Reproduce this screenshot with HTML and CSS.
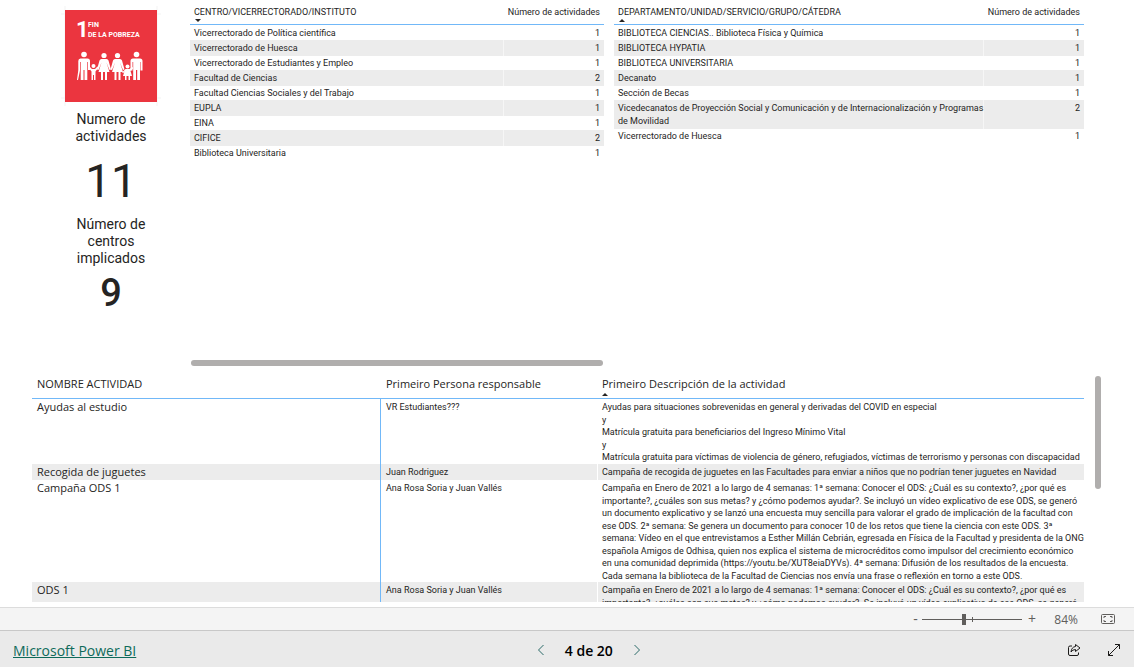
FILE: index.html
```html
<!DOCTYPE html>
<html lang="es">
<head>
<meta charset="utf-8">
<title>Microsoft Power BI</title>
<link rel="stylesheet" href="styles.css">
</head>
<body>
<main class="report">
  <section class="summary">
    <aside class="cards">
      <svg class="goal" viewBox="0 0 92 92" role="img" aria-label="Objetivo 1: Fin de la pobreza">
        <path class="crop" d="M0 -4V96M92 -4V96M-4 4H96M-4 88H96"/>
        <rect class="goal-bg" width="92" height="92"/>
        <text class="goal-number" x="11" y="27">1</text>
        <text class="goal-text" x="23" y="17">FIN</text>
        <text class="goal-text" x="23" y="27">DE LA POBREZA</text>
        <g class="people">
          <circle cx="19" cy="44.500" r="2.800"/>
          <path d="M15.500 48.500h7q2.500 0 2.500 2.500v9h-2v-8h-.700v18h-2.800V60h-1v10h-2.800V52h-.700v8.500L13 70h-1l1.300-10V51q0-2.500 2.200-2.500z"/>
          <circle cx="28.500" cy="56" r="2"/>
          <path d="M24.500 56.500l2.500 2.500h3l2.500-2.500 1 1-3 4V70h-1.500v-5h-1v5h-1.500v-8.500l-3-4z"/>
          <circle cx="39" cy="45.500" r="2.600"/>
          <path d="M36.500 49h5q1.500 0 2 1.500l2.500 9-1.500.500-3-7.500L44.500 62H42v8h-2v-8h-2v8h-2v-8h-2.500l3-9.500-3 7.500-1.500-.500 2.500-9q.500-1.500 2-1.500z"/>
          <circle cx="52.500" cy="45.500" r="2.600"/>
          <path d="M50 49h5q1.500 0 2 1.500l2.500 9-1.500.500-3-7.500L58 62h-2.500v8h-2v-8h-2v8h-2v-8H47l3-9.500-3 7.500-1.500-.500 2.500-9q.500-1.500 2-1.500z"/>
          <circle cx="62.500" cy="56.500" r="2"/>
          <path d="M60.500 59h4l3-2 .700 1.300-2.700 2.700 1.500 5H65v4h-1.500v-4h-2v4H60v-4h-2l1.500-5-1 2-1.500-.500z"/>
          <circle cx="71.500" cy="44.500" r="2.800"/>
          <path d="M68 48.500h7q2.500 0 2.500 2.500v9.500h-2V52H75v18h-2.800V60h-1.200v10h-2.800V52h-.700v8.500h-2V51q0-2.500 2.500-2.500z"/>
        </g>
      </svg>
      <h2 class="card-label">Numero de actividades</h2>
      <p class="card-value card-value-main">11</p>
      <h2 class="card-label">Número de centros implicados</h2>
      <p class="card-value card-value-strong">9</p>
    </aside>

    <div class="panel panel-centers">
      <table class="counts">
        <thead>
          <tr><th>CENTRO/VICERRECTORADO/INSTITUTO<span class="sort sort-down"></span></th><th class="num">Número de actividades</th></tr>
        </thead>
        <tbody>
          <tr><td>Vicerrectorado de Política científica</td><td class="num">1</td></tr>
          <tr><td>Vicerrectorado de Huesca</td><td class="num">1</td></tr>
          <tr><td>Vicerrectorado de Estudiantes y Empleo</td><td class="num">1</td></tr>
          <tr><td>Facultad de Ciencias</td><td class="num">2</td></tr>
          <tr><td>Facultad Ciencias Sociales y del Trabajo</td><td class="num">1</td></tr>
          <tr><td>EUPLA</td><td class="num">1</td></tr>
          <tr><td>EINA</td><td class="num">1</td></tr>
          <tr><td>CIFICE</td><td class="num">2</td></tr>
          <tr><td>Biblioteca Universitaria</td><td class="num">1</td></tr>
        </tbody>
      </table>
      <div class="scroll-x"></div>
    </div>

    <div class="panel panel-units">
      <table class="counts">
        <thead>
          <tr><th>DEPARTAMENTO/UNIDAD/SERVICIO/GRUPO/CÁTEDRA<span class="sort sort-up"></span></th><th class="num">Número de actividades</th></tr>
        </thead>
        <tbody>
          <tr><td>BIBLIOTECA CIENCIAS.. Biblioteca Física y Química</td><td class="num">1</td></tr>
          <tr><td>BIBLIOTECA HYPATIA</td><td class="num">1</td></tr>
          <tr><td>BIBLIOTECA UNIVERSITARIA</td><td class="num">1</td></tr>
          <tr><td>Decanato</td><td class="num">1</td></tr>
          <tr><td>Sección de Becas</td><td class="num">1</td></tr>
          <tr class="tall"><td>Vicedecanatos de Proyección Social y Comunicación y de Internacionalización y Programas<br>de Movilidad</td><td class="num">2</td></tr>
          <tr><td>Vicerrectorado de Huesca</td><td class="num">1</td></tr>
        </tbody>
      </table>
    </div>
  </section>

  <section class="details">
    <div class="details-view">
      <table class="activities">
        <colgroup><col class="col-name"><col class="col-person"><col></colgroup>
        <thead>
          <tr><th>NOMBRE ACTIVIDAD</th><th>Primeiro Persona responsable</th><th>Primeiro Descripción de la actividad<span class="sort sort-up"></span></th></tr>
        </thead>
        <tbody>
          <tr>
            <td class="name">Ayudas al estudio</td>
            <td>VR Estudiantes???</td>
            <td><span class="line">Ayudas para situaciones sobrevenidas en general y derivadas del COVID en especial</span><span class="line">y</span><span class="line">Matrícula gratuita para beneficiarios del Ingreso Mínimo Vital</span><span class="line">y</span><span class="line">Matrícula gratuita para víctimas de violencia de género, refugiados, víctimas de terrorismo y personas con discapacidad</span></td>
          </tr>
          <tr>
            <td class="name">Recogida de juguetes</td>
            <td>Juan Rodriguez</td>
            <td><span class="line">Campaña de recogida de juguetes en las Facultades para enviar a niños que no podrían tener juguetes en Navidad</span></td>
          </tr>
          <tr>
            <td class="name">Campaña ODS 1</td>
            <td>Ana Rosa Soria y Juan Vallés</td>
            <td><span class="line">Campaña en Enero de 2021 a lo largo de 4 semanas: 1ª semana: Conocer el ODS: ¿Cuál es su contexto?, ¿por qué es</span><span class="line">importante?, ¿cuáles son sus metas? y ¿cómo podemos ayudar?. Se incluyó un vídeo explicativo de ese ODS, se generó</span><span class="line">un documento explicativo y se lanzó una encuesta muy sencilla para valorar el grado de implicación de la facultad con</span><span class="line">ese ODS. 2ª semana: Se genera un documento para conocer 10 de los retos que tiene la ciencia con este ODS. 3ª</span><span class="line">semana: Vídeo en el que entrevistamos a Esther Millán Cebrián, egresada en Física de la Facultad y presidenta de la ONG</span><span class="line">española Amigos de Odhisa, quien nos explica el sistema de microcréditos como impulsor del crecimiento económico</span><span class="line">en una comunidad deprimida (https://youtu.be/XUT8eiaDYVs). 4ª semana: Difusión de los resultados de la encuesta.</span><span class="line">Cada semana la biblioteca de la Facultad de Ciencias nos envía una frase o reflexión en torno a este ODS.</span></td>
          </tr>
          <tr>
            <td class="name">ODS 1</td>
            <td>Ana Rosa Soria y Juan Vallés</td>
            <td><span class="line">Campaña en Enero de 2021 a lo largo de 4 semanas: 1ª semana: Conocer el ODS: ¿Cuál es su contexto?, ¿por qué es</span><span class="line">importante?, ¿cuáles son sus metas? y ¿cómo podemos ayudar?. Se incluyó un vídeo explicativo de ese ODS, se generó</span></td>
          </tr>
        </tbody>
      </table>
    </div>
    <div class="scroll-y"></div>
  </section>
</main>

<div class="zoombar">
  <button class="step step-minus" type="button" aria-label="Alejar">-</button>
  <span class="slider">
    <input class="range" type="range" min="0" max="100" value="42" aria-label="Zoom">
    <span class="tick"></span>
  </span>
  <button class="step" type="button" aria-label="Acercar">+</button>
  <span class="percent">84%</span>
  <button class="icon-button" type="button" aria-label="Ajustar a la página">
    <svg width="16" height="12" viewBox="0 0 16 12"><rect x="1.500" y="1.500" width="13" height="9" rx="1"/><path d="M4 5V3.500h2M10 3.500h2V5M12 7v1.500h-2M6 8.500H4V7"/></svg>
  </button>
</div>

<footer class="footer">
  <a class="brand" href="#">Microsoft Power BI</a>
  <nav class="pager">
    <button class="icon-button arrow" type="button" aria-label="Página anterior"><svg width="8" height="12" viewBox="0 0 8 12"><path d="M6.500 1L1.500 6l5 5"/></svg></button>
    <span class="page">4 de 20</span>
    <button class="icon-button arrow" type="button" aria-label="Página siguiente"><svg width="8" height="12" viewBox="0 0 8 12"><path d="M1.500 1l5 5-5 5"/></svg></button>
  </nav>
  <div class="actions">
    <button class="icon-button dark" type="button" aria-label="Compartir"><svg width="14" height="14" viewBox="0 0 14 14"><path d="M5 3H3Q1.500 3 1.500 4.500v6.500q0 1.500 1.500 1.500h7q1.500 0 1.500-1.500V9.500M8.500 1.500L13 5 8.500 8.500v-2Q5.500 6.500 4 9q.500-5 4.500-5.500z"/></svg></button>
    <button class="icon-button dark" type="button" aria-label="Pantalla completa"><svg width="14" height="14" viewBox="0 0 14 14"><path d="M1.500 12.500l11-11M8 1.500h4.500V6M1.500 8v4.500H6"/></svg></button>
  </div>
</footer>
</body>
</html>
```
FILE: styles.css
```css
* {
  box-sizing: border-box;
}

body {
  display: flex;
  flex-direction: column;
  height: 100vh;
  margin: 0;
  overflow: hidden;
  background: #fff;
  color: #252423;
  font-family: "Open Sans", "Noto Sans", sans-serif;
  font-size: 9px;
}

button {
  padding: 0;
  border: 0;
  background: none;
  color: inherit;
  font: inherit;
}

.report {
  display: flex;
  flex: 1;
  flex-direction: column;
  min-height: 0;
  padding: 0 33px 5px 32px;
}

/* Top area: cards and count tables */
.summary {
  display: flex;
  flex: 376 1 0;
  min-height: 0;
  padding-right: 17px;
}

.cards {
  display: flex;
  flex: none;
  flex-direction: column;
  align-items: center;
  width: 158px;
  padding-top: 10px;
  font-family: Roboto, sans-serif;
  text-align: center;
}

.goal {
  width: 92px;
  height: 92px;
  margin-bottom: 9px;
  overflow: visible;
}

.crop {
  fill: none;
  stroke: #f3f3f3;
}

.goal-bg {
  fill: #eb353f;
}

.goal-number,
.goal-text {
  fill: #fff;
  font-family: Roboto, sans-serif;
  font-weight: 700;
}

.goal-number {
  font-size: 22px;
}

.goal-text {
  font-size: 7px;
}

.people {
  fill: #fff;
}

.card-label {
  width: 90px;
  margin: 0;
  font-size: 14px;
  font-weight: 400;
  line-height: 17px;
}

.card-value {
  margin: 0;
}

.card-value-main {
  padding-top: 2px;
  font-size: 46px;
  line-height: 69px;
}

.card-value-strong {
  font-size: 38px;
  font-weight: 500;
  line-height: 52px;
}

.panel {
  display: flex;
  flex-direction: column;
  min-width: 0;
}

.panel-centers {
  flex: 414 1 0;
  margin-right: 10px;
}

.panel-units {
  flex: 470 1 0;
}

table {
  width: 100%;
  border-collapse: separate;
  border-spacing: 0;
  font-family: Roboto, "Open Sans", sans-serif;
}

th {
  position: relative;
  border-bottom: 1px solid #71b8f8;
  font-weight: 400;
  text-align: left;
  vertical-align: top;
}

td {
  vertical-align: top;
}

th,
td {
  white-space: nowrap;
}

tbody tr:nth-child(even) {
  background: #ececec;
}

.counts th {
  height: 25px;
  padding: 6px 0 5px 4px;
  line-height: 13px;
}

.counts td {
  height: 14px;
  padding: 0 0 0 4px;
  line-height: 14px;
}

.counts tbody tr:first-child td,
.counts tr:nth-child(even) td {
  padding-top: 1px;
}

.counts tbody tr:first-child td {
  height: 15px;
}

.counts tr:nth-child(even) td {
  height: 16px;
}

.counts tbody .tall td {
  padding-top: 2px;
  padding-bottom: 1px;
  line-height: 13px;
}

.counts tr .num {
  width: 101px;
  padding-right: 4px;
  padding-left: 0;
  text-align: right;
}

.counts tbody tr:nth-child(even) .num {
  border-left: 1px solid #f6f6f6;
}

.sort {
  position: absolute;
  bottom: 2px;
  left: 5px;
  border: 3px solid transparent;
}

.sort-up {
  border-top-width: 0;
  border-bottom-color: #252423;
}

.sort-down {
  border-bottom-width: 0;
  border-top-color: #252423;
}

.scroll-x {
  height: 6px;
  margin: auto 1px 10px;
  border-radius: 3px;
  background: #b0aead;
}

/* Activity table */
.details {
  display: flex;
  flex: 226 1 0;
  gap: 11px;
  min-height: 0;
}

.details-view {
  flex: 1;
  min-width: 0;
  overflow: hidden;
}

.activities {
  table-layout: fixed;
}

.col-name {
  width: 349px;
}

.col-person {
  width: 216px;
}

.activities th {
  height: 23px;
  padding: 0 5px 6px;
  font-family: "Open Sans", sans-serif;
  font-size: 11px;
  line-height: 16px;
}

.activities td {
  padding: 2px 5px 0;
  line-height: 13px;
}

.activities tr:nth-child(even) td {
  padding-bottom: 1px;
}

.activities tr .name {
  padding-top: 1px;
  border-right: 1px solid #71b8f8;
  font-family: "Open Sans", sans-serif;
  font-size: 11px;
}

.activities td:last-child {
  border-left: 1px solid #fff;
  padding-right: 0;
  padding-left: 4px;
}

.line {
  display: block;
  line-height: 13px;
}

.line:nth-child(even) {
  line-height: 12px;
}

.scroll-y {
  width: 6px;
  height: 50%;
  border-radius: 3px;
  background: #b0aead;
}

/* Zoom bar */
.zoombar {
  display: flex;
  flex: none;
  align-items: center;
  justify-content: flex-end;
  height: 23px;
  padding-right: 18px;
  border-top: 1px solid #dcdcdc;
  background: #f4f4f4;
  color: #605e5c;
}

.step {
  width: 14px;
  font-size: 14px;
  line-height: 20px;
}

.step-minus {
  width: 7px;
}

.slider {
  position: relative;
  display: flex;
  width: 100px;
  margin: 0 3px;
}

.range {
  width: 100%;
  height: 11px;
  margin: 0;
  appearance: none;
  background: linear-gradient(#605e5c, #605e5c) center / 100% 1px no-repeat;
}

.range::-webkit-slider-thumb {
  width: 4px;
  height: 11px;
  appearance: none;
  background: #605e5c;
}

.tick {
  position: absolute;
  top: 3px;
  left: 50%;
  width: 1px;
  height: 5px;
  background: #605e5c;
}

.percent {
  width: 39px;
  margin-right: 22px;
  font-size: 12px;
  text-align: right;
}

.icon-button {
  display: flex;
}

.icon-button svg {
  fill: none;
  stroke: #605e5c;
}

/* Footer */
.footer {
  display: grid;
  flex: none;
  grid-template-columns: 12fr auto 11fr;
  align-items: center;
  height: 37px;
  padding: 2px 13px 0;
  border-top: 1px solid #c8c8c8;
  background: #eaeaea;
}

.brand {
  justify-self: start;
  color: #0e6a5a;
  font-size: 14px;
}

.pager {
  display: flex;
  align-items: center;
  gap: 20px;
}

.page {
  color: #000;
  font-size: 14px;
  font-weight: 600;
}

.arrow svg {
  stroke: #2a6a68;
}

.actions {
  display: flex;
  gap: 26px;
  justify-self: end;
}

.dark svg {
  stroke: #1b1a19;
}
```
